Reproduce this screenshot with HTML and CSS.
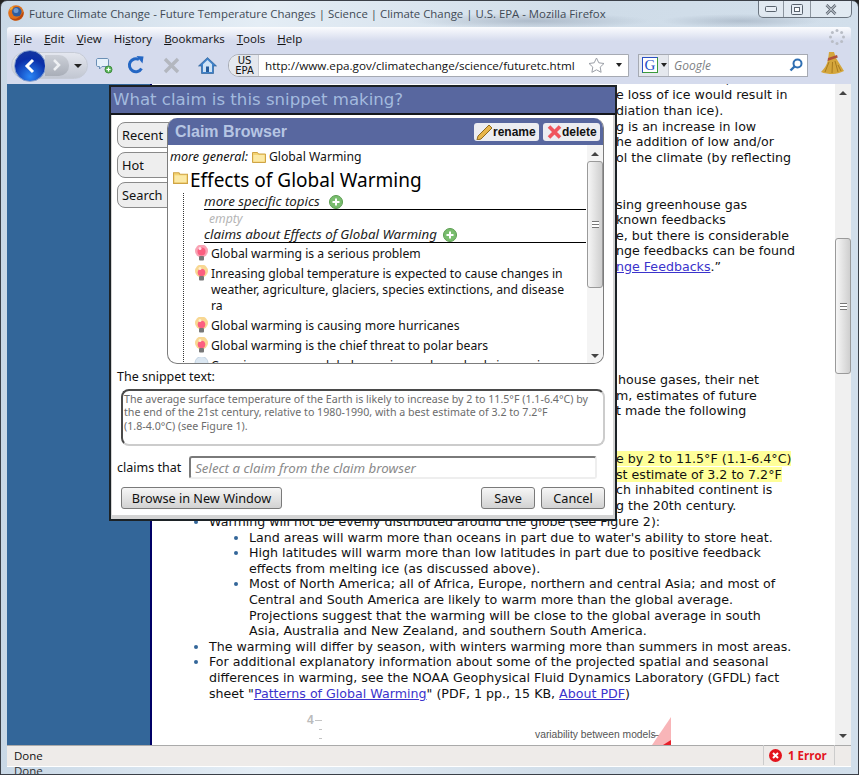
FILE: index.html
```html
<!DOCTYPE html>
<html lang="en">
<head>
<meta charset="utf-8">
<title>Future Climate Change</title>
<link rel="stylesheet" href="styles.css">
</head>
<body>
<div class="window">
  <header class="titlebar">
    <svg class="fx" viewBox="0 0 16 16" width="16" height="16"><circle cx="8" cy="8" r="7.800" fill="#e0701a"/><path d="M15.500 6.500A7.800 7.800 0 0 1 1 11.500c2 2.500 6 3 8.500 1.500 2.500-1.500 4.500-4 6-6.500z" fill="#b8480f"/><circle cx="8.800" cy="6.800" r="4.800" fill="#2e5c9e"/><circle cx="8" cy="5.500" r="2.500" fill="#6f9ad0"/><path d="M1 6c.8-2.500 2.500-4.500 5-5.300-1 1-1.500 2-1.500 3.300C3.500 4.500 2 5 1 6z" fill="#f4b23c"/></svg>
    <span class="title-text">Future Climate Change - Future Temperature Changes | Science | Climate Change | U.S. EPA - Mozilla Firefox</span>
    <div class="win-controls">
      <span class="wc"><svg width="12" height="6" viewBox="0 0 12 6"><rect x=".5" y=".5" width="11" height="5" rx="1" fill="#e8eef5" stroke="#59636e"/></svg></span>
      <span class="wc wc-max"><svg width="12" height="11" viewBox="0 0 12 11"><rect x=".5" y=".5" width="11" height="10" rx="1" fill="#e8eef5" stroke="#59636e"/><rect x="3.500" y="3.500" width="5" height="4" fill="#fff" stroke="#59636e"/></svg></span>
      <span class="wc wc-close"><svg width="12" height="11" viewBox="0 0 12 11"><path d="M1.500 1 10.500 10M10.500 1 1.500 10" stroke="#59636e" stroke-width="2.600"/><path d="M1.500 1 10.500 10M10.500 1 1.500 10" stroke="#e8eef5" stroke-width="1"/></svg></span>
    </div>
  </header>
  <div class="chrome">
    <nav class="menubar">
      <span><u>F</u>ile</span><span><u>E</u>dit</span><span><u>V</u>iew</span><span>Hi<u>s</u>tory</span><span><u>B</u>ookmarks</span><span><u>T</u>ools</span><span><u>H</u>elp</span>
      <svg class="throbber" width="16" height="16" viewBox="0 0 16 16"><g fill="#b9bdc6"><circle cx="8" cy="1.500" r="1.500"/><circle cx="12.600" cy="3.400" r="1.500"/><circle cx="14.500" cy="8" r="1.500"/><circle cx="12.600" cy="12.600" r="1.500"/><circle cx="8" cy="14.500" r="1.500"/><circle cx="3.400" cy="12.600" r="1.500"/><circle cx="1.500" cy="8" r="1.500"/><circle cx="3.400" cy="3.400" r="1.500"/></g></svg>
    </nav>
    <div class="toolbar">
      <div class="navpill">
        <span class="back"><svg width="14" height="16" viewBox="0 0 14 16"><path d="M10 2 4 8l6 6" fill="none" stroke="#fff" stroke-width="3"/></svg></span>
        <span class="fwd"><svg width="10" height="12" viewBox="0 0 10 12"><path d="M2 1l5 5-5 5" fill="none" stroke="#eef0f3" stroke-width="2.500"/></svg></span>
        <span class="navdrop"></span>
      </div>
      <svg class="tb-ic tb-note" width="17" height="17" viewBox="0 0 17 17"><path d="M2 1.500h9c1 0 1.500.5 1.500 1.500v5c0 1-.5 1.500-1.500 1.500H6l-2.500 2.500v-2.500H2C1 9.500.5 9 .5 8V3C.5 2 1 1.500 2 1.500z" fill="#e6f1fb" stroke="#6b8fb5"/><circle cx="12.500" cy="12.500" r="3.500" fill="#5cb85c" stroke="#3e8b3e"/><path d="M10.500 12.500h4M12.500 10.500v4" stroke="#fff" stroke-width="1.200"/></svg>
      <svg class="tb-ic tb-reload" width="18" height="18" viewBox="0 0 18 18"><path d="M14.500 12.500A6.500 6.500 0 1 1 12 3.500" fill="none" stroke="#2467c4" stroke-width="3"/><path d="M9.500 0 16.500 .5 15.500 7.500z" fill="#2467c4"/></svg>
      <svg class="tb-ic tb-stop" width="17" height="17" viewBox="0 0 17 17"><path d="M2 2l13 13M15 2 2 15" stroke="#b3b7bf" stroke-width="3.400"/></svg>
      <svg class="tb-ic tb-home" width="19" height="17" viewBox="0 0 19 17"><path d="M9.500 .5.500 9h3v7.500h12V9h3z" fill="#3f81c9" stroke="#24598f" stroke-width=".6"/><path d="M9.500 3 5 7.200v7.800h9V7.200z" fill="#cfe3f6"/><rect x="8" y="9.500" width="3" height="5.500" fill="#245b9b"/></svg>
      <div class="urlbar">
        <span class="site-badge">US<br>EPA</span>
        <span class="url">http://www.epa.gov/climatechange/science/futuretc.html</span>
        <svg class="star" width="17" height="16" viewBox="0 0 17 16"><path d="M8.500 1l2.300 4.800 5.200.7-3.800 3.600.9 5.200-4.600-2.500-4.600 2.500.9-5.200L1 6.500l5.200-.7z" fill="#fff" stroke="#9a9ea6"/></svg>
        <span class="drop url-drop"></span>
      </div>
      <div class="searchbar">
        <span class="engine"><span class="g-box">G</span><span class="drop"></span></span>
        <span class="search-hint">Google</span>
        <svg class="mag" width="14" height="14" viewBox="0 0 14 14"><circle cx="8.500" cy="5.500" r="4" fill="none" stroke="#2f6fb3" stroke-width="2"/><path d="M5.500 8.500 1.500 12.500" stroke="#2f6fb3" stroke-width="2.400"/></svg>
      </div>
      <svg class="broom" width="25" height="25" viewBox="0 0 25 25"><path d="M9 1h5l2 6 8 13c-4 2-8 3-11 3-4 0-9-.5-12-2 3-3 6-7 7-12z" fill="#d4a63c"/><path d="M8 7l9-3 .8 2.500L7.500 10z" fill="#b0503a"/><path d="M9 11 5 21M12.500 11l-.5 11M15 10l3 11M18 14l3 6" stroke="#a87b1f"/></svg>
    </div>
  </div>

  <main class="viewport">
    <div class="side"></div>
    <article class="page">
      <div class="col col-a">
        <p>m near the Arctic, sea ice</p>
        <p>e loss of ice would result in</p>
        <p>diation than ice).</p>
        <p>g is an increase in low</p>
        <p>he addition of low and/or</p>
        <p>ol the climate (by reflecting</p>
      </div>
      <div class="col col-b">
        <p>sing greenhouse gas</p>
        <p>known feedbacks</p>
        <p>e, but there is considerable</p>
        <p>nge feedbacks can be found</p>
        <p><a href="#">nge Feedbacks</a>.”</p>
      </div>
      <div class="col col-c">
        <p class="in2">house gases, their net</p>
        <p>m, estimates of future</p>
        <p>t made the following</p>
      </div>
      <div class="col col-d">
        <p><mark>e by 2 to 11.5°F (1.1-6.4°C)</mark></p>
        <p><mark>st estimate of 3.2 to 7.2°F</mark></p>
        <p>ch inhabited continent is</p>
        <p>g the 20th century.</p>
      </div>
      <ul class="list">
        <li>Warming will not be evenly distributed around the globe (see Figure 2):
          <ul>
            <li>Land areas will warm more than oceans in part due to water's ability to store heat.</li>
            <li>High latitudes will warm more than low latitudes in part due to positive feedback effects from melting ice (as discussed above).</li>
            <li>Most of North America; all of Africa, Europe, northern and central Asia; and most of Central and South America are likely to warm more than the global average. Projections suggest that the warming will be close to the global average in south Asia, Australia and New Zealand, and southern South America.</li>
          </ul>
        </li>
        <li>The warming will differ by season, with winters warming more than summers in most areas.</li>
        <li>For additional explanatory information about some of the projected spatial and seasonal differences in warming, see the NOAA Geophysical Fluid Dynamics Laboratory (GFDL) fact sheet "<a href="#">Patterns of Global Warming</a>" (PDF, 1 pp., 15 KB, <a href="#">About PDF</a>)</li>
      </ul>
      <svg class="figure" width="683" height="44" viewBox="0 0 683 44">
        <text x="155" y="23" class="fig-num">4</text>
        <path d="M163 19.500h7M167 28.500h3M167 37.500h3" stroke="#c4c4c4" stroke-width="1"/>
        <text x="383" y="37" class="fig-label">variability between models</text>
        <path d="M500 34.500h8" stroke="#777"/>
        <path d="M519 16v28H500z" fill="#f8b5b8"/>
        <path d="M519 39v5H511z" fill="#e8202a"/>
      </svg>
    </article>
    <div class="vscroll">
      <span class="sb-arrow"></span>
      <span class="sb-thumb"><span class="sb-grip"></span></span>
      <span class="sb-arrow down"></span>
    </div>

    <section class="dialog">
      <h1 class="dlg-title">What claim is this snippet making?</h1>
      <div class="dlg-body">
        <div class="tabs">
          <span class="tab">Recent</span>
          <span class="tab">Hot</span>
          <span class="tab">Search</span>
        </div>
        <div class="browser">
          <div class="br-head">
            <span class="br-title">Claim Browser</span>
            <span class="br-btn br-rename"><svg width="17" height="16" viewBox="0 0 17 16"><path d="M13 1l3 3L5 15l-4 1 1-4z" fill="#e8b64a" stroke="#8d6a1e"/></svg>rename</span>
            <span class="br-btn br-delete"><svg width="15" height="14" viewBox="0 0 15 14"><path d="M2 1.500 13 12.500M13 1.500 2 12.500" stroke="#f0555d" stroke-width="3.600"/></svg>delete</span>
          </div>
          <div class="br-content">
            <div class="br-scroll">
              <div class="more-general"><i>more general:</i><svg class="folder" width="14" height="12" viewBox="0 0 14 12"><path d="M.5 1.500h5l1 1.500h7v8.500H.5z" fill="#f4d372" stroke="#cfa445"/><rect x="1.500" y="4" width="11" height="6.500" fill="#fbe9a6"/></svg>Global Warming</div>
              <h2 class="topic"><svg class="folder" width="15" height="13" viewBox="0 0 14 12"><path d="M.5 1.500h5l1 1.500h7v8.500H.5z" fill="#f4d372" stroke="#cfa445"/><rect x="1.500" y="4" width="11" height="6.500" fill="#fbe9a6"/></svg>Effects of Global Warming</h2>
              <div class="tree">
                <div class="sec"><i>more specific topics</i><svg class="plus" width="14" height="14" viewBox="0 0 14 14"><circle cx="7" cy="7" r="6.500" fill="#79bd6e" stroke="#5b9c50"/><path d="M3.500 7h7M7 3.500v7" stroke="#fff" stroke-width="2"/></svg></div>
                <div class="empty">empty</div>
                <div class="sec"><i>claims about Effects of Global Warming</i><svg class="plus plus-b" width="14" height="14" viewBox="0 0 14 14"><circle cx="7" cy="7" r="6.500" fill="#79bd6e" stroke="#5b9c50"/><path d="M3.500 7h7M7 3.500v7" stroke="#fff" stroke-width="2"/></svg></div>
                <div class="claim"><svg class="bulb" width="15" height="16" viewBox="0 0 15 16"><circle cx="7.500" cy="6" r="6.500" fill="#f9a3b4"/><circle cx="7.500" cy="6.500" r="4" fill="#fb5f80"/><circle cx="6" cy="3.500" r="1.500" fill="#fde3e8"/><rect x="5" y="11" width="5" height="4.500" rx="1" fill="#777"/></svg><span>Global warming is a serious problem</span></div>
                <div class="claim"><svg class="bulb" width="15" height="16" viewBox="0 0 15 16"><circle cx="7.500" cy="6" r="6.500" fill="#f8d792"/><circle cx="7.500" cy="7.500" r="3.800" fill="#fb5f80"/><circle cx="6" cy="3.500" r="1.500" fill="#fdf0d0"/><rect x="5" y="11" width="5" height="4.500" rx="1" fill="#777"/></svg><span>Inreasing global temperature is expected to cause changes in<br>weather, agriculture, glaciers, species extinctions, and disease<br>ra</span></div>
                <div class="claim"><svg class="bulb" width="15" height="16" viewBox="0 0 15 16"><circle cx="7.500" cy="6" r="6.500" fill="#f8d792"/><circle cx="7.500" cy="7.500" r="3.800" fill="#fb5f80"/><circle cx="6" cy="3.500" r="1.500" fill="#fdf0d0"/><rect x="5" y="11" width="5" height="4.500" rx="1" fill="#777"/></svg><span>Global warming is causing more hurricanes</span></div>
                <div class="claim"><svg class="bulb" width="15" height="16" viewBox="0 0 15 16"><circle cx="7.500" cy="6" r="6.500" fill="#f8d792"/><circle cx="7.500" cy="7.500" r="3.800" fill="#fb5f80"/><circle cx="6" cy="3.500" r="1.500" fill="#fdf0d0"/><rect x="5" y="11" width="5" height="4.500" rx="1" fill="#777"/></svg><span>Global warming is the chief threat to polar bears</span></div>
                <div class="claim"><svg class="bulb" width="15" height="16" viewBox="0 0 15 16"><circle cx="7.500" cy="6" r="6.500" fill="#dbe7f2" stroke="#c3d3e2"/><rect x="5" y="11" width="5" height="4.500" rx="1" fill="#777"/></svg><span>Cosmic rays cause global warming and are slowly increasing</span></div>
              </div>
            </div>
            <div class="br-sb">
              <span class="sb-arrow"></span>
              <span class="sb-thumb"><span class="sb-grip"></span></span>
              <span class="sb-arrow down"></span>
            </div>
          </div>
        </div>
        <label class="snip-label">The snippet text:</label>
        <div class="snippet">The average surface temperature of the Earth is likely to increase by 2 to 11.5°F (1.1-6.4°C) by<br>the end of the 21st century, relative to 1980-1990, with a best estimate of 3.2 to 7.2°F<br>(1.8-4.0°C) (see Figure 1).</div>
        <div class="claims-row">
          <span>claims that</span>
          <div class="claim-input">Select a claim from the claim browser</div>
        </div>
        <div class="dlg-actions">
          <button class="btn btn-browse">Browse in New Window</button>
          <span class="spacer"></span>
          <button class="btn btn-save">Save</button>
          <button class="btn btn-cancel">Cancel</button>
        </div>
      </div>
    </section>
  </main>

  <footer class="statusbar">
    <span class="st-text">Done</span>
    <span class="st-err"><svg width="13" height="13" viewBox="0 0 13 13"><circle cx="6.500" cy="6.500" r="6.500" fill="#e3131d"/><path d="M4 4l5 5M9 4 4 9" stroke="#fff" stroke-width="2"/></svg>1 Error</span>
    <span class="st-grip"></span>
  </footer>
  <div class="status-ghost">Done</div>
</div>
</body>
</html>
```
FILE: styles.css
```css
* { box-sizing: border-box; }
html, body { margin: 0; height: 100%; overflow: hidden; }
body { background: #222; font-family: "Open Sans", sans-serif; }

.window {
  width: 859px; height: 775px; display: flex; flex-direction: column; position: relative;
  background:
    radial-gradient(ellipse 120px 8px at 530px 20px, rgba(120,135,155,.4), transparent),
    radial-gradient(ellipse 80px 7px at 740px 20px, rgba(120,135,155,.35), transparent),
    linear-gradient(90deg, #c9d8e6, #e4edf5 30%, #cfdce8 70%, #d2dfeb);
  border: 1px solid #3b4048; border-radius: 7px 7px 0 0;
  padding: 0 7px 0 6px;
}

.titlebar { height: 26px; display: flex; align-items: center; flex: none; padding-bottom: 2px; }
.fx { margin: 0 0 0 1px; flex: none; }
.title-text { font: 11.400px "Open Sans", sans-serif; color: #3f4a55; margin-left: 5px; white-space: nowrap; }
.win-controls { position: absolute; top: 0; right: 6px; display: flex; height: 17px; border: 1px solid #6a747f; border-top: 0; border-radius: 0 0 5px 5px; background: rgba(255,255,255,.35); }
.wc { width: 25px; display: flex; align-items: center; justify-content: center; border-right: 1px solid #8c959f; }
.wc-max { width: 27px; }
.wc-close { width: 40px; border-right: 0; }

.chrome { flex: none; background: linear-gradient(#fbfcfe, #d5dbed 14px); border-radius: 3px 3px 0 0; }
.menubar { height: 22px; display: flex; align-items: center; padding: 0 0 0 7px; gap: 12px; font: 11.500px "Open Sans", sans-serif; color: #111; position: relative; }
.menubar span { white-space: nowrap; }
.throbber { position: absolute; right: 6px; top: 2px; }

.toolbar { height: 35px; display: flex; align-items: center; padding: 0 0 3px 4px; position: relative; }
.navpill { width: 77px; height: 27px; background: linear-gradient(#e4e7ef, #c2c7d2); border-radius: 14px; display: flex; align-items: center; position: relative; flex: none; border: 1px solid #c6cbd6; }
.back { width: 32px; height: 32px; border-radius: 50%; background: radial-gradient(circle at 50% 85%, #2a86f5, #0a2ea8 60%, #1a3a9a); border: 1px solid #86a1d0; display: flex; align-items: center; justify-content: center; position: absolute; left: 2px; top: -3px; }
.fwd { position: absolute; left: 33px; top: 2px; width: 24px; height: 21px; border-radius: 0 10px 10px 0; background: linear-gradient(#ccd0d8, #a9aeb8); display: flex; align-items: center; justify-content: center; }
.navdrop { position: absolute; right: 5px; top: 11px; border: 4px solid transparent; border-top-color: #222; border-bottom: 0; }
.tb-ic { flex: none; }
.tb-note { margin-left: 8px; }
.tb-reload { margin-left: 14px; }
.tb-stop { margin-left: 18px; }
.tb-home { margin-left: 18px; }

.urlbar { width: 401px; height: 23px; margin-left: 11px; flex: none; display: flex; align-items: center; background: #fff; border: 1px solid #a6aab3; border-radius: 11px 0 0 11px; overflow: hidden; }
.site-badge { width: 30px; height: 21px; flex: none; background: #e5e8ee; border-right: 1px solid #c8cbd2; font: 10px/10px "DejaVu Sans", sans-serif; text-align: center; color: #111; padding: 1px 0 0 2px; }
.url { font: 11.660px "Open Sans", sans-serif; color: #111; margin-left: 6px; white-space: nowrap; flex: 1; }
.star { flex: none; margin-right: 11px; }
.drop { display: inline-block; border: 3px solid transparent; border-top: 4px solid #222; border-bottom: 0; }
.url-drop { margin-right: 6px; }

.searchbar { width: 170px; height: 23px; margin-left: 9px; flex: none; background: #fff; border: 1px solid #a6aab3; display: flex; align-items: center; }
.engine { width: 30px; height: 21px; background: #e5e8ee; border-right: 1px solid #c8cbd2; display: flex; align-items: center; gap: 3px; padding-left: 3px; flex: none; }
.g-box { width: 16px; height: 16px; border: 1px solid #3a9a3a; border-left-color: #2a4fc4; border-top-color: #2a4fc4; font: 15px/14px "Liberation Serif", serif; color: #1f4fc8; text-align: center; background: #fff; }
.search-hint { font: italic 12px "Open Sans", sans-serif; color: #7d7f84; margin-left: 5px; flex: 1; }
.mag { margin-right: 4px; }
.broom { position: absolute; right: 6px; top: 2px; }

.viewport { height: 661px; flex: none; background: #fff; display: flex; position: relative; overflow: hidden; }
.side { width: 145px; flex: none; background: #336699; border-right: 2px solid #000066; }
.page { flex: 1; min-width: 0; font: 12.640px/15.600px "DejaVu Sans", Verdana, sans-serif; color: #111; overflow: hidden; }
.page p { margin: 0; white-space: nowrap; }
.page .in2 { padding-left: 2px; }
.page a { color: #3b33cc; }
mark { background: #ffff99; color: inherit; }
.col { padding-left: 464px; }
.col-a { margin-top: -12.200px; }
.col-b { margin-top: 31.200px; }
.col-c { margin-top: 97.600px; }
.col-d { margin-top: 32.200px; }
.list { margin: .6px 0 0; padding: 0 40px 0 57px; }
.list ul { margin: 0; padding-left: 40px; list-style: disc; }
.list ::marker { color: #336699; }
.figure { display: block; }
.fig-num { font: bold 12px "Liberation Sans", sans-serif; fill: #bbb; }
.fig-label { font: 10.300px "Liberation Sans", sans-serif; fill: #555; }

.vscroll { width: 16px; flex: none; background: #f0f0f0; display: flex; flex-direction: column; }
.sb-arrow { height: 18px; position: relative; flex: none; }
.sb-arrow::after { content: ""; position: absolute; left: 4px; top: 7px; border: 4px solid transparent; border-top: 0; border-bottom: 4px solid #444; }
.sb-arrow.down { margin-top: auto; }
.sb-arrow.down::after { border-bottom: 0; border-top: 4px solid #444; }
.sb-thumb { height: 136px; margin: 136px 0 0; background: linear-gradient(90deg, #f6f6f6, #cfcfcf); border: 1px solid #9a9a9a; border-radius: 3px; display: flex; align-items: center; justify-content: center; }
.sb-grip { width: 7px; height: 7px; border-top: 1px solid #777; border-bottom: 1px solid #777; background: linear-gradient(#fff 0 2px, #777 2px 3px, #fff 3px); }

.dialog { position: absolute; left: 102px; top: 1px; width: 508px; height: 436px; background: #fff; border: 2px solid #1c2226; display: flex; flex-direction: column; }
.dlg-title { margin: 0; height: 28px; background: #58679f; color: #a3bade; font: 400 16.600px/26px "DejaVu Sans", sans-serif; padding-left: 2px; border-bottom: 2px solid #14171c; flex: none; }
.dlg-body { position: relative; flex: 1; border: solid #d4d4d4; border-width: 0 2px 4px 1px; min-height: 0; }

.tabs { position: absolute; left: 5px; top: 7px; display: flex; flex-direction: column; gap: 4px; }
.tab { width: 58px; height: 26px; background: #eee; border: 1px solid #8a8a8a; border-radius: 8px 0 0 8px; font: 12.800px/24px "Noto Sans", sans-serif; padding-left: 4px; color: #111; }

.browser { margin: 3px 0 0 55px; position: relative; width: 437px; height: 246px; border: 1px solid #7c7c7c; border-top: 0; border-radius: 10px; overflow: hidden; background: #fff; display: flex; flex-direction: column; }
.br-head { height: 27px; flex: none; background: #58679f; display: flex; align-items: center; gap: 4px; padding: 0 3px 0 7px; }
.br-title { font: bold 16px "Liberation Sans", sans-serif; color: #b6c5e3; margin-right: auto; }
.br-btn { height: 18px; background: #ecedf1; border-radius: 3px; font: bold 12px/18px "Liberation Sans", sans-serif; color: #111; display: flex; align-items: center; }
.br-rename { width: 65px; padding-left: 2px; }
.br-delete { width: 57px; padding-left: 4px; }
.br-content { flex: 1; display: flex; min-height: 0; }
.br-scroll { flex: 1; min-width: 0; padding: 3px 0 0 2px; overflow: hidden; font: 12.200px/16px "Noto Sans", sans-serif; color: #111; }
.br-sb { width: 16px; flex: none; background: #f4f4f4; display: flex; flex-direction: column; }
.br-sb .sb-thumb { height: 127px; margin-top: 0; }
.br-sb .sb-arrow { height: 16px; }

.more-general { height: 16px; line-height: 17px; white-space: nowrap; }
.more-general i { font-size: 12.600px; }
.more-general .folder { vertical-align: -2px; margin: 0 3px 0 4px; }
.topic { margin: 5px 0 0; font: 400 19px/22px "Noto Sans", sans-serif; color: #000; white-space: nowrap; }
.topic .folder { vertical-align: 3px; margin: 0 2px 0 3px; }
.tree { margin: 2px 1px 0 13px; border-left: 1px dotted #333; }
.sec { margin-left: 20px; height: 17px; line-height: 16px; border-bottom: 1px solid #000; white-space: nowrap; font-size: 13.300px; color: #222; }
.sec .plus { vertical-align: -3px; margin-left: 9px; }
.sec .plus-b { margin-left: 6px; }
.empty { margin-left: 25px; height: 16px; line-height: 18px; font-style: italic; color: #b5b5b5; }
.claim { display: flex; margin: 2px 0 3px 10px; white-space: nowrap; }
.claim + .claim { margin-top: 0; }
.claim .bulb { flex: none; margin-right: 2px; }
.claim span { padding-top: 1px; }

.snip-label { display: block; margin: 5px 0 0 5px; font: 12.500px/16px "Noto Sans", sans-serif; color: #111; }
.snippet { margin: 4px 0 0 9px; width: 484px; height: 57px; border: 2px solid #4a4a4a; border-right-color: #ccc; border-bottom-color: #ccc; border-radius: 8px; font: 10.660px/13.300px "Noto Sans", sans-serif; color: #6c6c6c; padding: 2px 1px; white-space: nowrap; overflow: hidden; }
.claims-row { margin: 10px 0 0 5px; display: flex; align-items: center; gap: 8px; font: 12.500px "Noto Sans", sans-serif; color: #111; }
.claim-input { width: 408px; height: 23px; border: 2px solid #7a7a7a; border-right-color: #eee; border-bottom-color: #eee; border-radius: 3px; padding: 1px 4px; font: italic 13.300px/18px "Noto Sans", sans-serif; color: #8a8a8a; }
.dlg-actions { margin-top: 8px; padding: 0 8px 0 9px; display: flex; gap: 6px; }
.spacer { flex: 1; }
.btn { height: 22px; padding: 0; background: linear-gradient(#f6f6f6, #d2d2d2); border: 1px solid #7a7a7a; border-radius: 3px; font: 12.700px "Noto Sans", sans-serif; color: #111; }
.btn-browse { width: 161px; }
.btn-save { width: 54px; }
.btn-cancel { width: 64px; }

.statusbar { height: 21px; flex: none; background: #eeebe9; border-top: 1px solid #aaa; display: flex; align-items: center; font: 11.500px "Open Sans", sans-serif; color: #111; padding: 0 0 2px 7px; }
.st-text { flex: 1; }
.st-err { width: 72px; height: 20px; border-left: 1px solid #ccc; border-right: 1px solid #ccc; display: flex; align-items: center; gap: 6px; padding-left: 5px; color: #e3131d; font-weight: bold; white-space: nowrap; }
.st-grip { width: 16px; }
.status-ghost { height: 8px; overflow: hidden; font: 11.500px/7px "Open Sans", sans-serif; padding-left: 7px; color: #333; border-top: 1px solid #fff; }
```
